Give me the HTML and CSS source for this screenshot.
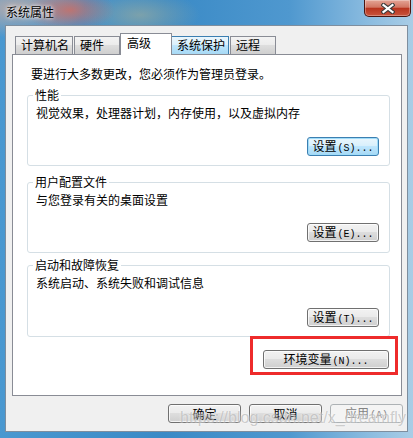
FILE: index.html
```html
<!DOCTYPE html>
<html lang="zh-CN">
<head>
<meta charset="utf-8">
<title>系统属性</title>
<link rel="stylesheet" href="styles.css">
</head>
<body>
<div class="frame">
  <div class="titlebar">
    <span class="title">系统属性</span>
    <button class="close" aria-label="关闭">
      <svg width="14" height="11" viewBox="0 0 14 11"><path d="M2.5 2 L11.5 9 M11.5 2 L2.5 9" stroke="#3b3b3b" stroke-width="4.2" stroke-linecap="square"/><path d="M2.5 2 L11.5 9 M11.5 2 L2.5 9" stroke="#fff" stroke-width="2.2" stroke-linecap="square"/></svg>
    </button>
  </div>
  <div class="client">
    <div class="tabs">
      <div class="tab t1">计算机名</div>
      <div class="tab t2">硬件</div>
      <div class="tab sel">高级</div>
      <div class="tab hover t4">系统保护</div>
      <div class="tab t5">远程</div>
    </div>
    <div class="panel">
      <p class="note">要进行大多数更改，您必须作为管理员登录。</p>
      <fieldset class="group g1">
        <legend>性能</legend>
        <p class="desc">视觉效果，处理器计划，内存使用，以及虚拟内存</p>
        <div class="row"><button class="btn focus">设置<span class="lat">(S)...</span></button></div>
      </fieldset>
      <fieldset class="group g2">
        <legend>用户配置文件</legend>
        <p class="desc">与您登录有关的桌面设置</p>
        <div class="row"><button class="btn">设置<span class="lat">(E)...</span></button></div>
      </fieldset>
      <fieldset class="group g3">
        <legend>启动和故障恢复</legend>
        <p class="desc">系统启动、系统失败和调试信息</p>
        <div class="row"><button class="btn">设置<span class="lat">(T)...</span></button></div>
      </fieldset>
      <div class="envwrap">
        <div class="highlight"><button class="btn env">环境变量<span class="lat">(N)...</span></button></div>
      </div>
    </div>
    <div class="footer">
      <button class="btn foot">确定</button>
      <button class="btn foot">取消</button>
      <button class="btn foot disabled">应用<span class="lat">(A)</span></button>
    </div>
    <div class="watermark">https://blog.csdn.net/x_dreamfly</div>
  </div>
</div>
</body>
</html>
```
FILE: styles.css
```css
* { box-sizing: border-box; }
html, body { margin: 0; padding: 0; }
body {
  width: 413px;
  height: 438px;
  overflow: hidden;
  font-family: "Noto Sans CJK SC", sans-serif;
  font-size: 12px;
  color: #000;
}
.frame {
  width: 413px;
  height: 438px;
  display: flex;
  flex-direction: column;
  background:
    radial-gradient(ellipse 45px 22px at 70px 10px, rgba(205,110,100,.85), rgba(205,110,100,0)),
    radial-gradient(ellipse 70px 30px at 15px 8px, rgba(190,172,168,.9), rgba(190,172,168,0)),
    radial-gradient(ellipse 60px 25px at 140px 15px, rgba(150,170,160,.7), rgba(150,170,160,0)),
    linear-gradient(to right, #4a98d0 0%, #3a8ac6 40%, #4f98cf 70%, #8dbde0 90%, #a9cde6 100%);
}
.titlebar {
  height: 25px;
  flex: none;
  display: flex;
  align-items: flex-start;
  justify-content: space-between;
}
.title {
  margin: 4px 0 0 6px;
  line-height: 16px;
  text-shadow: 0 0 5px #fff, 0 0 3px rgba(255,255,255,.8);
}
.close {
  width: 47px;
  height: 17px;
  margin-right: 2px;
  padding: 0;
  border: 1px solid #4a1510;
  border-top: none;
  border-radius: 0 0 5px 5px;
  background: linear-gradient(#e4a596, #d27663 45%, #b8341e 52%, #c9553d 100%);
  box-shadow: inset 0 0 0 1px rgba(255,255,255,.3);
  display: flex;
  align-items: center;
  justify-content: center;
}
.client {
  position: relative;
  height: 407px;
  margin: 0 5px 6px 5px;
  background: #f0f0f0;
  border: 1px solid #7e8e9e;
}
.tabs {
  position: relative;
  z-index: 1;
  display: flex;
  align-items: flex-end;
  height: 22px;
  margin: 7px 0 -1px 9px;
}
.tab {
  height: 18px;
  margin-bottom: 1px;
  padding-left: 5px;
  border: 1px solid #898c95;
  border-bottom: none;
  background: linear-gradient(#f3f3f3, #ebebeb 50%, #dddddd 50%, #cfcfcf);
  line-height: 16px;
  white-space: nowrap;
}
.t1 { width: 58px; margin-right: 1px; }
.t2 { width: 46px; }
.t4 { width: 58px; margin-left: -1px; margin-right: 1px; }
.t5 { width: 46px; }
.tab.hover {
  border-color: #3c7fb1;
  background: linear-gradient(#eaf6fd, #d9f0fc 50%, #bee6fd 50%, #a7d9f5);
}
.tab.sel {
  position: relative;
  z-index: 2;
  width: 52px;
  height: 22px;
  margin-bottom: 0;
  padding-left: 6px;
  background: #fff;
  line-height: 18px;
}
.panel {
  height: 342px;
  margin: 0 5px 0 6px;
  border: 1px solid #898c95;
  background: #fff;
}
.note {
  margin: 11px 0 0 18px;
  line-height: 16px;
}
.group {
  margin: 6px 11px 0 14px;
  padding: 0 10px 9px 8px;
  border: 1px solid #d5dfe5;
  border-radius: 3px;
  min-width: 0;
}
.g2 { margin-top: 9px; padding-bottom: 10px; }
.g3 { margin-top: 5px; }
.group legend {
  margin-left: -3px;
  padding: 0 2px;
  line-height: 14px;
}
.desc {
  margin: 3px 0 0 0;
  line-height: 16px;
}
.row {
  display: flex;
  justify-content: flex-end;
  margin-top: 16px;
}
.g2 .row { margin-top: 15px; }
.g3 .row { margin-top: 17px; }
.btn {
  width: 72px;
  height: 19px;
  padding: 0;
  border: 1px solid #707070;
  border-radius: 3px;
  background: linear-gradient(#f2f2f2, #ebebeb 45%, #dddddd 50%, #cfcfcf);
  box-shadow: inset 0 0 0 1px rgba(255,255,255,.75);
  font-family: "Noto Sans CJK SC", sans-serif;
  font-size: 12px;
  line-height: 15px;
  color: #000;
  white-space: nowrap;
}
.btn.focus {
  border-color: #3c7fb1;
  background: linear-gradient(#eaf6fd, #d9f0fc 45%, #bee6fd 50%, #a7d9f5);
  box-shadow: inset 0 0 0 1px #9fdcf9;
}
.lat {
  font-family: "Liberation Mono", monospace;
  font-size: 10px;
  margin-left: 1px;
}
.envwrap {
  display: flex;
  justify-content: flex-end;
  margin: -1px 3px 0 0;
}
.highlight {
  border: 3px solid #ee2b2b;
  padding: 11px 6px 3px 10px;
}
.btn.env { width: 126px; }
.footer {
  display: flex;
  justify-content: flex-end;
  gap: 8px;
  margin: 8px 4px 0 0;
}
.btn.foot { width: 73px; }
.btn.disabled {
  border-color: #adb2b5;
  background: #f4f4f4;
  box-shadow: none;
  color: #838383;
}
.watermark {
  position: absolute;
  left: 174px;
  top: 384px;
  font-family: "Liberation Sans", sans-serif;
  font-size: 16px;
  line-height: 16px;
  color: rgba(150,150,150,.45);
  text-shadow: 0 0 2px rgba(255,255,255,.9);
  white-space: nowrap;
  pointer-events: none;
}
```
